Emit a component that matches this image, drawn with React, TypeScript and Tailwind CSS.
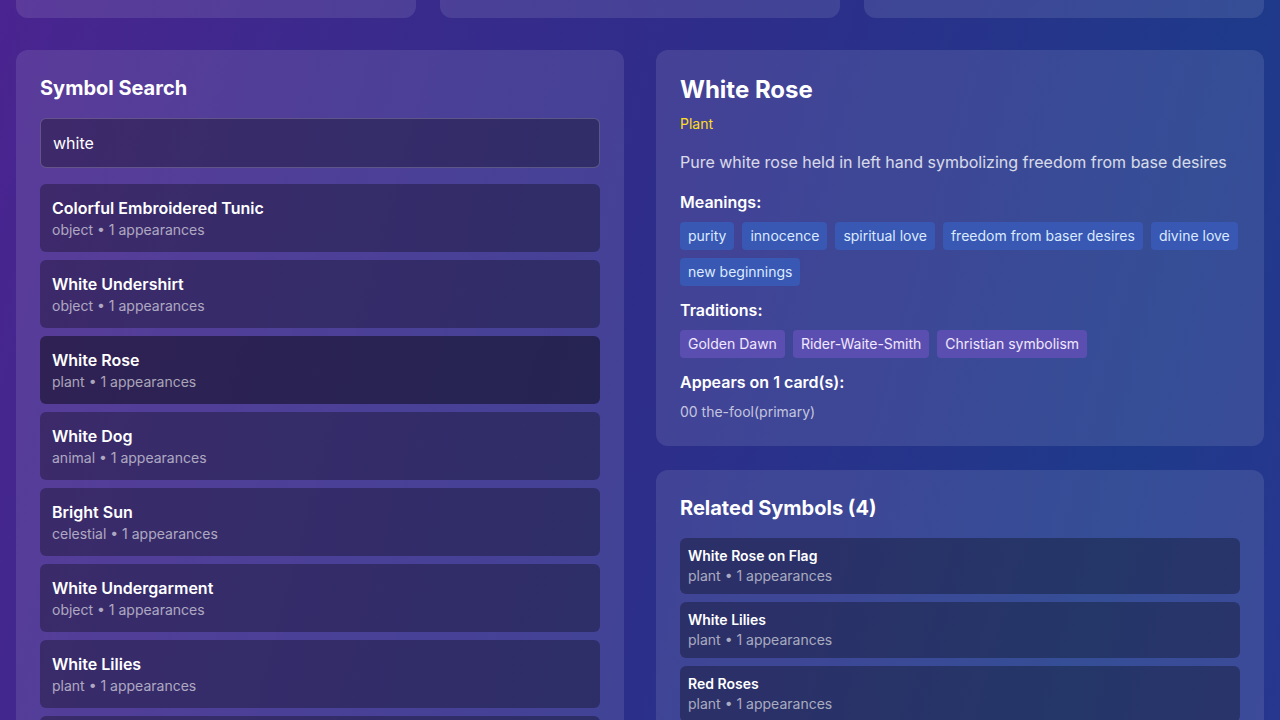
import React from "react";

const searchResults = [
  { name: "Colorful Embroidered Tunic", type: "object", count: 1 },
  { name: "White Undershirt", type: "object", count: 1 },
  { name: "White Rose", type: "plant", count: 1, selected: true },
  { name: "White Dog", type: "animal", count: 1 },
  { name: "Bright Sun", type: "celestial", count: 1 },
  { name: "White Undergarment", type: "object", count: 1 },
  { name: "White Lilies", type: "plant", count: 1 },
  { name: "White Mountains", type: "landscape", count: 1 },
];

const meanings = [
  "purity",
  "innocence",
  "spiritual love",
  "freedom from baser desires",
  "divine love",
  "new beginnings",
];

const traditions = ["Golden Dawn", "Rider-Waite-Smith", "Christian symbolism"];

const related = [
  { name: "White Rose on Flag", type: "plant", count: 1 },
  { name: "White Lilies", type: "plant", count: 1 },
  { name: "Red Roses", type: "plant", count: 1 },
  { name: "Rose Garden", type: "plant", count: 1 },
];

export default function App() {
  return (
    <div
      className="h-[720px] w-full overflow-hidden text-white bg-[linear-gradient(105deg,#4a2490_0%,#3a2a8c_25%,#2e2d8a_50%,#1f3a8a_85%,#27368f_100%)]"
      style={{ fontFamily: "Inter, 'Noto Sans', sans-serif" }}
    >
      <div className="px-4 flex flex-col">
        <div className="grid grid-cols-3 gap-6">
          <div className="h-[18px] rounded-b-xl bg-white/10" />
          <div className="h-[18px] rounded-b-xl bg-white/10" />
          <div className="h-[18px] rounded-b-xl bg-white/10" />
        </div>

        <div className="mt-8 grid grid-cols-2 gap-8 items-start">
          {/* Left: search */}
          <div className="rounded-xl bg-white/10 p-6">
            <h2 className="text-xl font-bold mb-4">Symbol Search</h2>
            <input
              readOnly
              value="white"
              className="w-full rounded-md border border-white/20 bg-black/30 px-3 py-3 text-base leading-6 text-white outline-none mb-4"
            />
            <div className="flex flex-col gap-2">
              {searchResults.map((s) => (
                <div
                  key={s.name}
                  className={`rounded-md px-3 py-3 ${s.selected ? "bg-black/[0.45]" : "bg-black/30"}`}
                >
                  <div className="text-base leading-6 font-semibold">{s.name}</div>
                  <div className="text-sm leading-5 text-white/60">
                    {s.type} • {s.count} appearances
                  </div>
                </div>
              ))}
            </div>
          </div>

          {/* Right column */}
          <div className="flex flex-col gap-6">
            <div className="rounded-xl bg-white/10 p-6">
              <h2 className="text-2xl font-bold mb-2">White Rose</h2>
              <div className="text-sm text-yellow-300 mb-4">Plant</div>
              <p className="text-base text-white/80 mb-4">
                Pure white rose held in left hand symbolizing freedom from base desires
              </p>

              <div className="mb-3">
                <h3 className="font-semibold mb-2">Meanings:</h3>
                <div className="flex flex-wrap gap-2">
                  {meanings.map((m) => (
                    <span
                      key={m}
                      className="rounded px-2 py-1 text-sm bg-[#3858b4] text-blue-100"
                    >
                      {m}
                    </span>
                  ))}
                </div>
              </div>

              <div className="mb-3">
                <h3 className="font-semibold mb-2">Traditions:</h3>
                <div className="flex flex-wrap gap-2">
                  {traditions.map((t) => (
                    <span
                      key={t}
                      className="rounded px-2 py-1 text-sm bg-[#5a4eb0] text-purple-100"
                    >
                      {t}
                    </span>
                  ))}
                </div>
              </div>

              <div>
                <h3 className="font-semibold mb-2">Appears on 1 card(s):</h3>
                <div className="text-sm text-white/70">00 the-fool(primary)</div>
              </div>
            </div>

            <div className="rounded-xl bg-white/10 p-6">
              <h2 className="text-xl font-bold mb-4">Related Symbols (4)</h2>
              <div className="flex flex-col gap-2">
                {related.map((r) => (
                  <div key={r.name} className="rounded-md bg-black/30 px-2 py-2">
                    <div className="text-sm leading-5 font-semibold">{r.name}</div>
                    <div className="text-sm leading-5 text-white/60">
                      {r.type} • {r.count} appearances
                    </div>
                  </div>
                ))}
              </div>
            </div>
          </div>
        </div>
      </div>
    </div>
  );
}
